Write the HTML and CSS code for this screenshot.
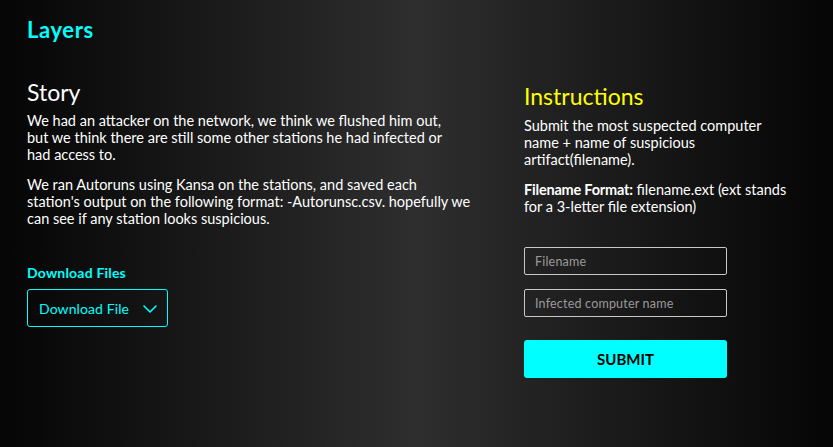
FILE: index.html
```html
<!DOCTYPE html>
<html lang="en">
<head>
<meta charset="utf-8">
<title>Layers</title>
<link rel="stylesheet" href="styles.css">
</head>
<body>
<div class="page">
  <h1 class="brand">Layers</h1>
  <div class="columns">
    <section class="story">
      <h2 class="story-title">Story</h2>
      <p class="text">We had an attacker on the network, we think we flushed him out,<br>but we think there are still some other stations he had infected or<br>had access to.</p>
      <p class="text">We ran Autoruns using Kansa on the stations, and saved each<br>station's output on the following format: -Autorunsc.csv. hopefully we<br>can see if any station looks suspicious.</p>
      <h3 class="dl-title">Download Files</h3>
      <button class="dl-btn" type="button"><span class="dl-label">Download File</span>
        <svg class="chev" width="14" height="8" viewBox="0 0 14 8"><path d="M1 1l6 6 6-6" fill="none" stroke="#00ffff" stroke-width="1.6" stroke-linecap="round" stroke-linejoin="round"/></svg>
      </button>
    </section>
    <section class="instr">
      <h2 class="instr-title">Instructions</h2>
      <p class="text">Submit the most suspected computer<br>name + name of suspicious<br>artifact(filename).</p>
      <p class="text"><b>Filename Format:</b> filename.ext (ext stands<br>for a 3-letter file extension)</p>
      <form class="form">
        <input class="field" type="text" placeholder="Filename">
        <input class="field" type="text" placeholder="Infected computer name">
        <button class="submit" type="button">SUBMIT</button>
      </form>
    </section>
  </div>
</div>
</body>
</html>
```
FILE: styles.css
```css
* { box-sizing: border-box; }
html, body { margin: 0; padding: 0; height: 100%; }
body {
  background: linear-gradient(to right, #050505 0%, #2e2e2e 50%, #050505 100%);
  font-family: Lato, "Noto Sans", sans-serif;
  color: #ffffff;
}
.page { padding: 16px 27px 0 27px; }
.brand {
  margin: 0;
  font-size: 22px;
  font-weight: 700;
  color: #00ffff;
  line-height: 28px;
  letter-spacing: 0.6px;
}
.columns {
  display: flex;
  margin-top: 34px;
}
.story { width: 497px; padding-right: 20px; }
.instr { width: 282px; padding-top: 4px; }
.story-title, .instr-title {
  margin: 0 0 6px 0;
  font-size: 23px;
  font-weight: 400;
  line-height: 28px;
}
.instr-title { color: #ffff00; margin-bottom: 7px; }
.text {
  margin: 0 0 13px 0;
  font-size: 14.5px;
  line-height: 17px;
  color: #ffffff;
  white-space: nowrap;
}
.text b { font-weight: 700; letter-spacing: -0.2px; }
.dl-title {
  margin: 37px 0 8px 0;
  font-size: 14px;
  font-weight: 700;
  color: #00ffff;
  line-height: 17px;
  letter-spacing: 0.2px;
}
.dl-btn {
  display: flex;
  align-items: center;
  gap: 14px;
  width: 141px;
  height: 38px;
  padding: 0 0 0 11px;
  background: transparent;
  border: 1px solid #00ffff;
  border-radius: 3px;
  color: #00ffff;
  font-family: inherit;
  font-size: 14px;
  letter-spacing: 0.1px;
}
.dl-label { white-space: nowrap; }
.chev { margin-top: 1px; flex: none; }
.form {
  display: flex;
  flex-direction: column;
  gap: 14px;
  width: 203px;
  margin-top: 32px;
}
.field {
  height: 28px;
  padding: 0 10px;
  background: transparent;
  border: 1px solid #c8c8c8;
  border-radius: 2px;
  color: #fff;
  font-family: inherit;
  font-size: 12.5px;
  letter-spacing: 0.2px;
}
.field::placeholder { color: #9a9a9a; }
.submit {
  margin-top: 9px;
  height: 38px;
  border: none;
  border-radius: 3px;
  background: #00ffff;
  color: #000;
  font-family: inherit;
  font-weight: 700;
  font-size: 15px;
}
```
